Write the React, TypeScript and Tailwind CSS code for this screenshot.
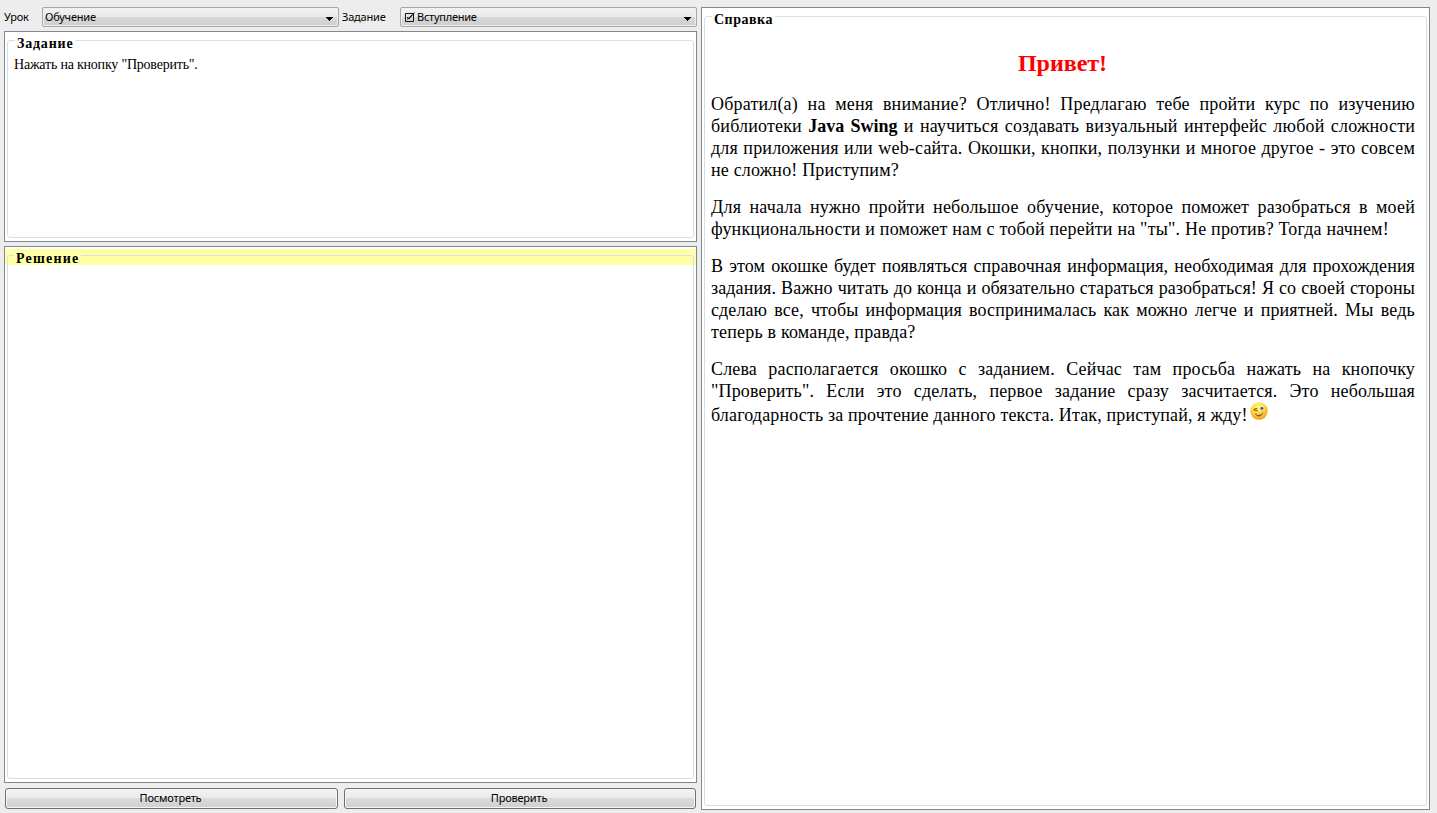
import type { ReactNode } from "react";

function Arrow() {
  return (
    <svg width="7" height="4" viewBox="0 0 7 4" className="mt-[3px] shrink-0" shapeRendering="crispEdges">
      <path d="M0 0h7v1h-1v1h-1v1h-1v1h-1v-1h-1v-1h-1v-1h-1z" fill="#000" />
    </svg>
  );
}

function Combo({ children, className }: { children: ReactNode; className: string }) {
  return (
    <div
      className={`flex h-5 items-center justify-between rounded-[2px] border border-[#a6a6aa] bg-[linear-gradient(#f2f2f2_0%,#e9e9e9_49%,#d8d8d8_50%,#cecece_100%)] pr-[5px] pl-[2px] shadow-[inset_0_0_0_1px_#f0f0f0] ${className}`}
    >
      <span className="flex items-center">{children}</span>
      <Arrow />
    </div>
  );
}

function Panel({ title, titleClass, className, highlight, children }: {
  title: string;
  titleClass: string;
  className: string;
  highlight?: boolean;
  children?: ReactNode;
}) {
  return (
    <section
      className={`flex flex-col border border-[#828790] px-[2px] pb-[3px] font-['Liberation_Serif',serif] ${highlight ? "bg-[linear-gradient(#fff_2px,#ffffa6_2px,#ffffa6_18px,#fff_18px)]" : "bg-white"} ${className}`}
    >
      <fieldset className="min-h-0 min-w-0 flex-1 rounded-[3px] border border-[#d5dfe5]">
        <legend className={`h-[9px] px-[2px] text-[14px] leading-4 font-bold whitespace-nowrap ${titleClass}`}>
          {title}
        </legend>
        {children}
      </fieldset>
    </section>
  );
}

function Button({ children, className }: { children: ReactNode; className: string }) {
  return (
    <button
      className={`h-[21px] rounded-[3px] border border-[#707070] bg-[linear-gradient(#f2f2f2_0%,#ebebeb_49%,#dbdbdb_50%,#cfcfcf_100%)] pr-[2px] pb-px text-center leading-[18px] tracking-[-0.2px] shadow-[inset_0_0_0_1px_#f6f6f6] ${className}`}
    >
      {children}
    </button>
  );
}

function Wink() {
  return (
    <svg width="18" height="18" viewBox="0 0 18 18" className="ml-[2px] inline-block align-[1px]">
      <defs>
        <radialGradient id="face" cx="45%" cy="30%" r="70%">
          <stop offset="0" stopColor="#fff68c" />
          <stop offset="0.55" stopColor="#ffd83c" />
          <stop offset="1" stopColor="#f29a16" />
        </radialGradient>
      </defs>
      <circle cx="9" cy="9" r="8.7" fill="url(#face)" />
      <ellipse cx="11.7" cy="6" rx="2.2" ry="2.2" fill="#fff3b0" />
      <ellipse cx="11.9" cy="6.4" rx="1.5" ry="1.3" fill="#4a4a78" />
      <path d="M7.2 6.6C5.2 6.3 3.9 7.1 4 8.4M4.6 8.3 7.6 8.6" fill="none" stroke="#7d4f0c" strokeWidth="1.1" />
      <path d="M5 11.2c2.8 1.4 6 .9 8.4-2-.2 3.1-2 5.1-4.6 5.2-2 0-3.3-1.3-3.8-3.2z" fill="#a65316" />
      <path d="M6.6 12.2c2.2.5 4.3 0 5.9-1.4" fill="none" stroke="#fff0c0" strokeWidth=".9" />
    </svg>
  );
}

export default function App() {
  return (
    <main className="flex h-[813px] w-[1437px] gap-1 overflow-hidden bg-[#ededed] pt-[7px] pr-[7px] pb-[3px] pl-1 font-['Noto_Sans',sans-serif] text-[11px] text-black">
      <div className="flex w-[693px] shrink-0 flex-col">
        <div className="flex h-5 items-center">
          <span className="w-[38px] tracking-[-0.3px]">Урок</span>
          <Combo className="w-[297px]"><span className="tracking-[-0.2px]">Обучение</span></Combo>
          <span className="w-[61px] pl-[3px] tracking-[-0.2px]">Задание</span>
          <Combo className="w-[297px]">
            <svg width="10" height="10" viewBox="0 0 10 10" className="mr-[2px] ml-[2px]">
              <path d="M.5 1.5h8v8h-8zM2 5l2 2L9.5.5M2 7.5 7 3" fill="none" stroke="#111" />
            </svg>
            <span className="tracking-[-0.25px]">Вступление</span>
          </Combo>
        </div>
        <Panel title="Задание" titleClass="ml-[7px] tracking-[0.8px]" className="mt-1 h-[211px] pt-[4px]">
          <p className="pt-[12px] pl-[6px] text-[14px] leading-4 tracking-[-0.21px]">Нажать на кнопку "Проверить".</p>
        </Panel>
        <Panel title="Решение" titleClass="ml-[6px] tracking-[1.2px]" className="mt-1 h-[537px] pt-[4px]" highlight />
        <div className="mt-[5px] flex gap-[6px] pl-px">
          <Button className="w-[333px]">Посмотреть</Button>
          <Button className="w-[352px]">Проверить</Button>
        </div>
      </div>
      <Panel title="Справка" titleClass="ml-[7px] tracking-[0.5px]" className="h-[803px] w-[729px] pt-[4px]">
        <article className="pt-[27px] pr-[11px] pl-[6px] text-justify text-[18px] leading-[22px]">
          <h1 className="mb-[15px] pr-px text-center text-[24px] leading-[30px] font-bold text-[#f00]">Привет!</h1>
          <div className="space-y-[15px]">
            <p className="tracking-[0.18px]">Обратил(а) на меня внимание? Отлично! Предлагаю тебе пройти курс по изучению библиотеки <b className="tracking-normal">Java Swing</b> и научиться создавать визуальный интерфейс любой сложности для приложения или web-сайта. Окошки, кнопки, ползунки и многое другое - это совсем не сложно! Приступим?</p>
            <p className="tracking-[0.2px]">Для начала нужно пройти небольшое обучение, которое поможет разобраться в моей функциональности и поможет нам с тобой перейти на "ты". Не против? Тогда начнем!</p>
            <p className="tracking-[0.1px]">В этом окошке будет появляться справочная информация, необходимая для прохождения задания. Важно читать до конца и обязательно стараться разобраться! Я со своей стороны сделаю все, чтобы информация воспринималась как можно легче и приятней. <span className="tracking-[0.2px]">Мы ведь теперь в команде, правда?</span></p>
            <p className="tracking-[0.15px]">Слева располагается окошко с заданием. Сейчас там просьба нажать на кнопочку "Проверить". Если это сделать, первое задание сразу засчитается. Это небольшая благодарность за прочтение данного текста. Итак, приступай, я жду!<Wink /></p>
          </div>
        </article>
      </Panel>
    </main>
  );
}
